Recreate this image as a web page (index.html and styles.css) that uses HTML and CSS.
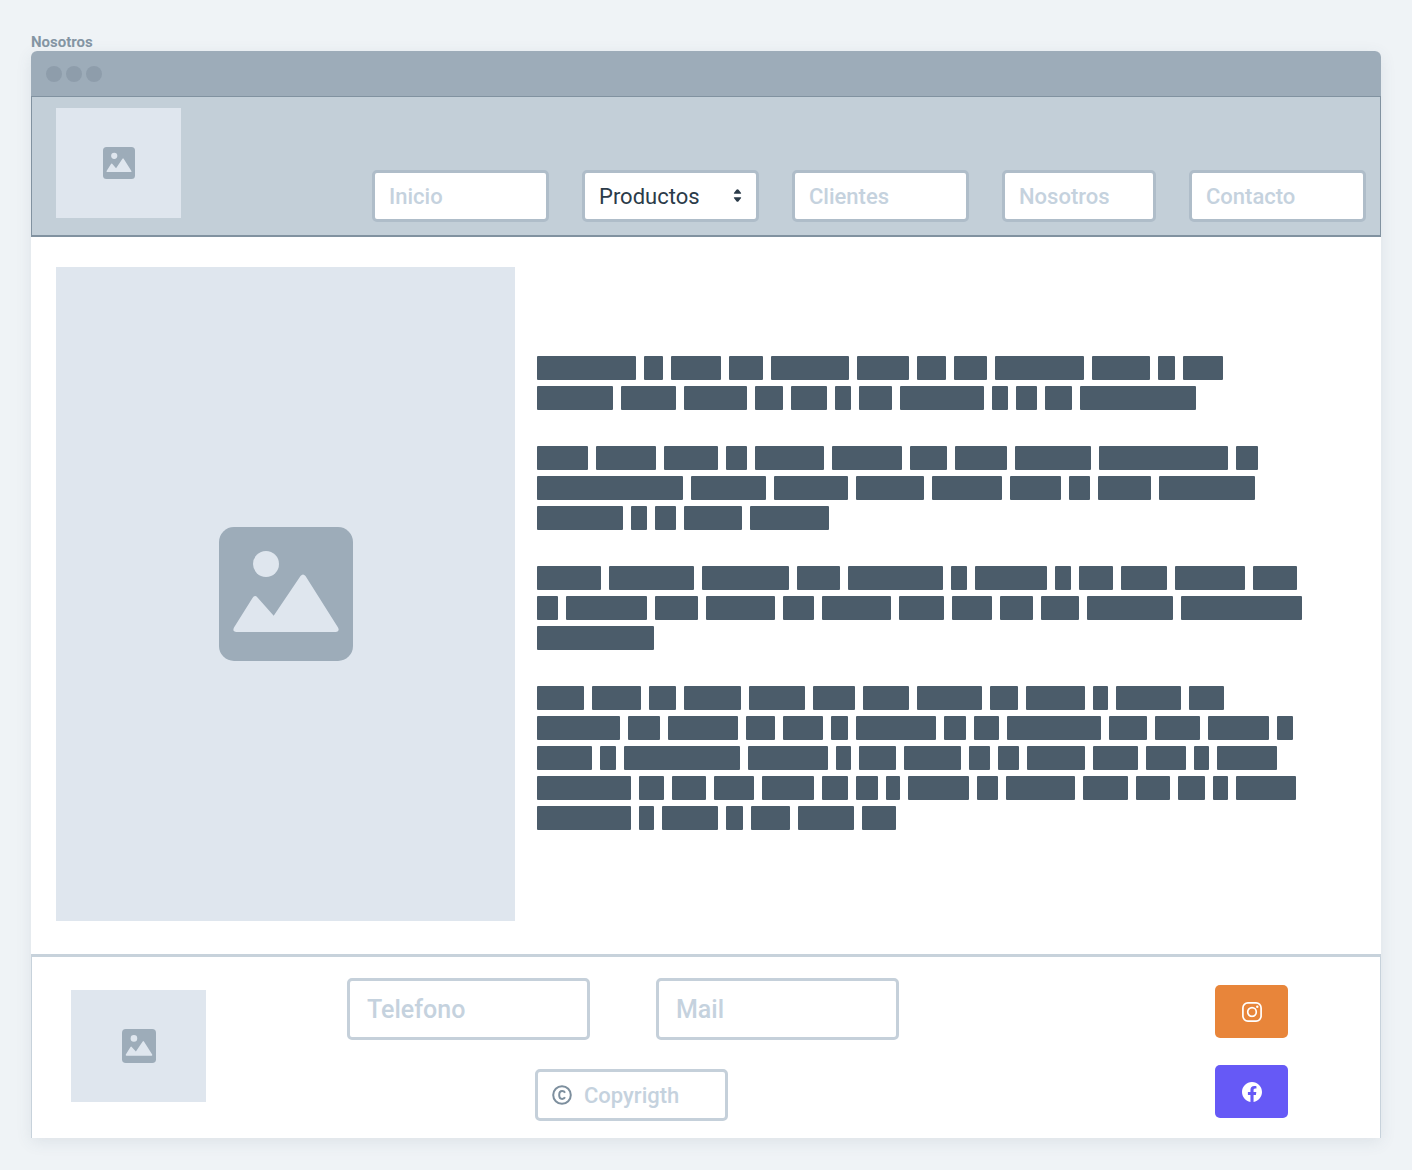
FILE: index.html
```html
<!DOCTYPE html>
<html lang="es">
<head>
<meta charset="utf-8">
<meta name="viewport" content="width=device-width, initial-scale=1">
<title>Nosotros</title>
<link rel="stylesheet" href="styles.css">
</head>
<body>
<svg class="sprite" aria-hidden="true">
  <symbol id="picture" viewBox="0 0 134 134">
    <rect class="picture-frame" width="134" height="134" rx="15"/>
    <circle class="picture-shape" cx="47" cy="37" r="13"/>
    <path class="picture-shape" d="M17.500 105Q13 104.500 15 100.500L33.500 71Q35.700 67.500 38.500 70.500L54.700 88.700L81.500 49Q84 46 86.500 49L119 100.500Q121 104.500 117 105Z"/>
  </symbol>
</svg>
<h1 class="frame-title">Nosotros</h1>
<div class="window">
  <div class="titlebar"><span class="dot"></span><span class="dot"></span><span class="dot"></span></div>
  <header class="header">
    <div class="picture header-logo" role="img" aria-label="Logo"><svg class="icon-small"><use href="#picture"/></svg></div>
    <nav class="nav">
      <input class="field nav-field" type="text" placeholder="Inicio" aria-label="Inicio">
      <div class="select-wrap">
        <select class="field nav-field nav-select" aria-label="Productos"><option>Productos</option></select>
        <svg class="select-arrows" viewBox="0 0 10 14" aria-hidden="true"><path d="M5 0Q5.700 0 6.200 .7L9 4.200Q9.300 5 8.500 5H1.500Q.7 5 1 4.200L3.800 .7Q4.300 0 5 0ZM5 14Q4.300 14 3.800 13.300L1 9.800Q.7 9 1.500 9H8.500Q9.300 9 9 9.800L6.200 13.300Q5.700 14 5 14Z"/></svg>
      </div>
      <input class="field nav-field" type="text" placeholder="Clientes" aria-label="Clientes">
      <input class="field nav-field nav-field-narrow" type="text" placeholder="Nosotros" aria-label="Nosotros">
      <input class="field nav-field" type="text" placeholder="Contacto" aria-label="Contacto">
    </nav>
  </header>
  <main class="main">
    <div class="picture main-picture" role="img" aria-label="Imagen"><svg class="icon-large"><use href="#picture"/></svg></div>
    <div class="copy" id="copy"></div>
  </main>
  <footer class="footer">
    <div class="picture footer-logo" role="img" aria-label="Logo"><svg class="icon-medium"><use href="#picture"/></svg></div>
    <div class="contact">
      <div class="contact-row">
        <input class="field contact-field" type="tel" placeholder="Telefono" aria-label="Telefono">
        <input class="field contact-field" type="email" placeholder="Mail" aria-label="Mail">
      </div>
      <label class="field copyright">
        <svg class="copyright-icon" viewBox="0 0 20 20" aria-hidden="true"><circle cx="10" cy="10" r="8.800"/><path d="M13 7.700Q12.200 6.100 10.200 6.100Q7.200 6.100 7.200 10T10.200 13.900Q12.200 13.900 13 12.300"/></svg>
        <input class="copyright-input" type="text" placeholder="Copyrigth" aria-label="Copyrigth">
      </label>
    </div>
    <div class="social">
      <button class="social-button instagram" type="button" aria-label="Instagram">
        <svg class="social-icon" viewBox="0 0 20 20" fill="none" stroke="#fff" stroke-width="1.700"><rect x=".9" y=".9" width="18.200" height="18.200" rx="5"/><circle cx="10" cy="10" r="4.300"/><circle cx="15.300" cy="4.700" r="1.200" fill="#fff" stroke="none"/></svg>
      </button>
      <button class="social-button facebook" type="button" aria-label="Facebook">
        <svg class="social-icon" viewBox="0 0 24 24" fill="#fff"><path d="M24 12.073c0-6.627-5.373-12-12-12s-12 5.373-12 12c0 5.990 4.388 10.954 10.125 11.854v-8.385H7.078v-3.470h3.047V9.430c0-3.007 1.792-4.669 4.533-4.669 1.312 0 2.686.235 2.686.235v2.953H15.830c-1.491 0-1.956.925-1.956 1.874v2.250h3.328l-.532 3.470h-2.796v8.385C19.612 23.027 24 18.062 24 12.073z"/></svg>
      </button>
    </div>
  </footer>
</div>
<script src="script.js"></script>
</body>
</html>
```
FILE: styles.css
```css
* {
  box-sizing: border-box;
}

body {
  margin: 0;
  padding: 33px 31px 32px;
  background: #eff3f6;
  font-family: Roboto, "Liberation Sans", sans-serif;
  font-weight: 500;
}

.sprite {
  display: none;
}

.frame-title {
  margin: 0;
  color: #8495a3;
  font-size: 15px;
  font-weight: 700;
  line-height: 18px;
}

.window {
  border-radius: 6px 6px 0 0;
  background: #fff;
  box-shadow: 0 4px 16px rgba(70, 90, 110, 0.1);
}

.titlebar {
  display: flex;
  align-items: center;
  gap: 4px;
  height: 45px;
  padding: 0 15px;
  border-radius: 6px 6px 0 0;
  background: #9dacb9;
}

.dot {
  width: 16px;
  height: 16px;
  border-radius: 50%;
  background: #8e9dab;
}

.picture {
  display: flex;
  flex: none;
  align-items: center;
  justify-content: center;
  background: #dfe6ee;
}

.picture-frame {
  fill: #9dacb9;
}

.picture-shape {
  fill: #dfe6ee;
}

.icon-small {
  width: 32px;
  height: 32px;
}

.icon-medium {
  width: 34px;
  height: 34px;
}

.icon-large {
  width: 134px;
  height: 134px;
}

.header {
  display: flex;
  align-items: flex-end;
  justify-content: space-between;
  padding: 11px 14px 13px 24px;
  border: solid #8192a0;
  border-width: 1px 1px 2px;
  background: #c3cfd8;
}

.header-logo {
  width: 125px;
  height: 110px;
  margin-bottom: 4px;
}

.nav {
  display: flex;
  gap: 33px;
}

.field {
  border: 3px solid #c5d0da;
  border-radius: 5px;
  background: #fff;
  color: #2b3b49;
  font: inherit;
}

.field::placeholder,
.copyright-input::placeholder {
  color: #c5d2de;
  opacity: 1;
}

.nav-field {
  display: block;
  width: 177px;
  height: 52px;
  padding: 0 14px;
  border-color: #afbdc9;
  font-size: 22px;
  appearance: none;
}

.nav-field-narrow {
  width: 154px;
}

.nav-select {
  font-weight: 400;
}

.select-wrap {
  position: relative;
}

.select-arrows {
  position: absolute;
  top: 19px;
  right: 17px;
  width: 9px;
  height: 13px;
  fill: #2b3b49;
  pointer-events: none;
}

.main {
  display: flex;
  align-items: center;
  gap: 22px;
  padding: 30px 24px 33px 25px;
}

.main-picture {
  width: 459px;
  height: 654px;
}

.copy {
  display: grid;
  gap: 36px;
  max-width: 768px;
  padding-bottom: 2px;
}

.paragraph {
  display: flex;
  flex-wrap: wrap;
  gap: 6px 8px;
  margin: 0;
}

.word {
  height: 24px;
  border-radius: 1px;
  background: #4b5c6a;
}

.footer {
  display: flex;
  align-items: flex-start;
  padding: 21px 92px 17px 39px;
  border: solid #c7d2db;
  border-width: 3px 1px 0;
}

.footer-logo {
  width: 135px;
  height: 112px;
  margin: 12px 141px 0 0;
}

.contact {
  display: flex;
  flex-direction: column;
  gap: 29px;
}

.contact-row {
  display: flex;
  gap: 66px;
}

.contact-field {
  width: 243px;
  height: 62px;
  padding: 0 17px;
  font-size: 25px;
}

.copyright {
  display: flex;
  align-items: center;
  gap: 12px;
  width: 193px;
  height: 52px;
  margin-left: 188px;
  padding: 0 14px;
}

.copyright-icon {
  flex: none;
  width: 20px;
  height: 20px;
  fill: none;
  stroke: #7d8f9e;
  stroke-width: 2;
}

.copyright-input {
  width: 100%;
  min-width: 0;
  padding: 0;
  border: 0;
  background: none;
  font: inherit;
  font-size: 22px;
}

.social {
  display: grid;
  gap: 27px;
  margin: 7px 0 0 auto;
}

.social-button {
  display: flex;
  align-items: center;
  justify-content: center;
  width: 73px;
  height: 53px;
  padding: 0;
  border: 0;
  border-radius: 5px;
}

.instagram {
  background: #e8853a;
}

.facebook {
  background: #6659f6;
}

.social-icon {
  width: 20px;
  height: 20px;
}
```
FILE: script.js
```js
// Word widths, in pixels, for each paragraph of placeholder copy.
const paragraphs = [
  [99, 19, 50, 34, 78, 52, 29, 33, 89, 58, 17, 40,
   76, 55, 63, 28, 36, 16, 33, 84, 16, 21, 27, 116],
  [51, 60, 54, 21, 69, 70, 37, 52, 76, 129, 22,
   146, 75, 74, 68, 70, 51, 21, 53, 96,
   86, 16, 21, 58, 79],
  [64, 85, 87, 43, 95, 16, 72, 16, 34, 46, 70, 44,
   21, 81, 43, 69, 31, 69, 45, 40, 33, 38, 86, 121,
   117],
  [47, 49, 27, 57, 56, 42, 46, 65, 28, 59, 15, 65, 35,
   83, 32, 70, 29, 40, 17, 80, 22, 25, 94, 38, 45, 61, 16,
   55, 16, 116, 80, 15, 37, 57, 21, 21, 58, 45, 40, 15, 60,
   94, 25, 34, 40, 52, 26, 22, 14, 61, 21, 69, 45, 34, 27, 15, 60,
   94, 15, 56, 17, 39, 56, 34]
];

const copy = document.getElementById("copy");
for (const words of paragraphs) {
  const paragraph = document.createElement("p");
  paragraph.className = "paragraph";
  for (const width of words) {
    const word = document.createElement("span");
    word.className = "word";
    word.style.width = width + "px";
    paragraph.append(word);
  }
  copy.append(paragraph);
}
```
